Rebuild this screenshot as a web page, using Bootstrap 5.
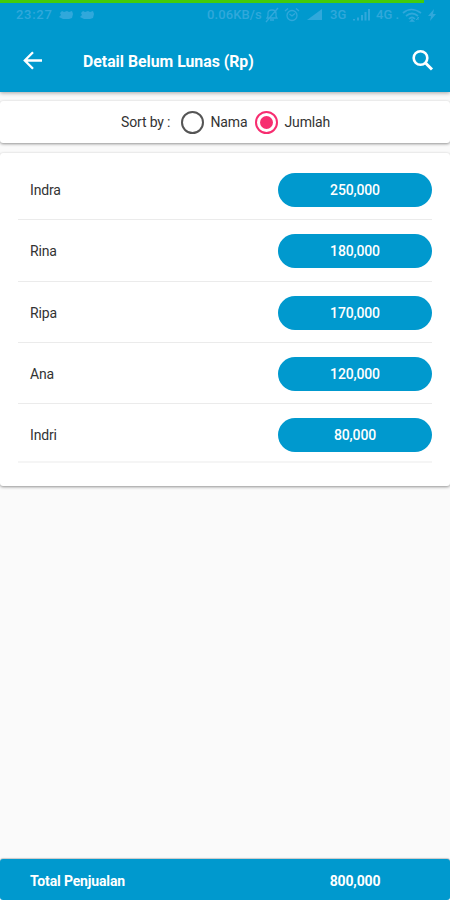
<!DOCTYPE html>
<html lang="id">
<head>
<meta charset="utf-8">
<meta name="viewport" content="width=device-width, initial-scale=1">
<title>Detail Belum Lunas (Rp)</title>
<link href="https://cdn.jsdelivr.net/npm/bootstrap@5.3.0/dist/css/bootstrap.min.css" rel="stylesheet">
<style>
body{font-family:Roboto,"Liberation Sans",sans-serif;background:#fafafa;color:#333;font-size:14px;letter-spacing:-.15px;line-height:20px;height:900px;overflow:hidden}
.bg-sea{background:#0099ce;color:#fff}
.app-top{height:92px;box-shadow:0 1px 4px rgba(0,0,0,.35)}
.charge{height:3px;background:#43cc0b;width:424px}
.status{height:24px;padding:0 14px 0 16px;color:#30a8db;font-size:13px;font-weight:500;line-height:24px;letter-spacing:0}
.status svg{display:block;flex:none}
.status span{white-space:nowrap;flex:none}
.clock{width:43px;letter-spacing:.7px}
.speed{width:57px;letter-spacing:.1px}
.gen3{width:23px;margin-left:6px}
.gen4{width:26px;margin-left:5px}
.gap6{margin-left:6px}
.bar{height:65px;padding:2px 15px 0 22px}
.bar h1{font-size:15.8px;letter-spacing:0;line-height:22px;margin:2px 0 0 39px;font-weight:700}
.panel{background:#fff;border-radius:3px;box-shadow:0 1px 3px rgba(0,0,0,.42)}
.sorter{height:42px;margin-top:9px;padding-left:121px}
.sorter span{white-space:nowrap}
.lbl-sort{width:51.5px}
.lbl-name{width:36px}
.dial{width:23px;height:23px;border:2px solid #555;border-radius:50%;background:#fff;margin:0 7px 0 8px}
.dial.on{border-color:#f72d70}
.dial.on::after{content:"";width:13px;height:13px;border-radius:50%;background:#f72d70}
.people{margin-top:10px;height:333px;padding:6px 18px 0}
.person{height:61.25px;border-bottom:1px solid #ebebeb;padding:2px 0 0 12px}
.person:last-child{height:59px;border-bottom:2px solid #f5f5f5;padding-top:4px}
.amount{width:154px;height:34px;font-weight:500}
.total{height:41px;padding-left:30px;font-weight:700;padding-top:2px;box-shadow:0 -1px 1px rgba(0,0,0,.2);border-radius:3px}
.sum{width:154px;margin-right:18px}
</style>
<script src="https://cdn.jsdelivr.net/npm/bootstrap@5.3.0/dist/js/bootstrap.bundle.min.js"></script>
</head>
<body class="d-flex flex-column">
<header class="app-top bg-sea flex-shrink-0">
  <div class="charge"></div>
  <div class="status d-flex align-items-center">
    <span class="clock">23:27</span>
    <svg width="36" height="12" viewBox="0 0 36 12" fill="currentColor"><path id="pet" d="M1 4l2-2 2 1 3-1 2 1 3-1 1 3-1 4-3 1H4L2 9 0 8l2-2z"/><use href="#pet" x="21"/></svg>
    <span class="speed ms-auto">0.06KB/s</span>
    <svg width="16" height="16" viewBox="0 0 16 16" fill="none" stroke="currentColor" stroke-width="1.300"><path d="M3 11h10l-1-2V6c0-2-1.500-3-4-3S4 4 4 6v3zM6 13h4M14 1L2 15"/></svg>
    <svg class="ms-1" width="16" height="16" viewBox="0 0 16 16" fill="none" stroke="currentColor" stroke-width="1.300"><circle cx="8" cy="8.500" r="5"/><path d="M1 4l3-2.500M15 4l-3-2.500M5.500 7L8 9l3-2.500"/></svg>
    <svg class="gap6" width="18" height="14" viewBox="0 0 18 14" fill="currentColor"><path d="M1 12L16 1v11z"/></svg>
    <span class="gen3">3G</span>
    <svg width="18" height="14" viewBox="0 0 18 14" fill="currentColor"><path d="M0 11h2v1.500H0zM4 9.500h2v3H4zM8 7h2v5.500H8zM11.500 4h2v8.500h-2zM15 1h2v11.500h-2z"/></svg>
    <span class="gen4">4G .</span>
    <svg width="20" height="16" viewBox="0 0 20 16" fill="none" stroke="currentColor" stroke-width="1.700"><path d="M1 6q8-7 18 0M4 9q6-5 12 0M7 12q3-3 6 0"/><path d="M9 14l1-1 1 1z"/><path d="M14 13l3-3M16 13v-3" stroke-width="1"/></svg>
    <svg class="gap6" width="8" height="14" viewBox="0 0 8 14" fill="currentColor"><path d="M6 1L0 8h3l-1 5 6-7H5z"/></svg>
  </div>
  <div class="bar d-flex align-items-center">
    <svg width="22" height="22" viewBox="0 0 22 22" fill="none" stroke="#fff" stroke-width="2.300"><path d="M20 10.500H3M11 2.300L2.800 10.500l8.200 8.200"/></svg>
    <h1>Detail Belum Lunas (Rp)</h1>
    <svg class="ms-auto" width="24" height="24" viewBox="0 0 24 24" fill="none" stroke="#fff" stroke-width="2.600"><circle cx="9.500" cy="9" r="6.800"/><path d="M14.300 13.800l6.700 6.700" stroke-width="3"/></svg>
  </div>
</header>
<section class="panel sorter d-flex align-items-center flex-shrink-0">
  <span class="lbl-sort">Sort by :</span><i class="dial"></i><span class="lbl-name">Nama</span>
  <i class="dial on d-flex align-items-center justify-content-center"></i><span class="lbl-sum">Jumlah</span>
</section>
<main class="panel people flex-shrink-0">
  <div class="person d-flex align-items-center justify-content-between"><span>Indra</span><span class="amount bg-sea rounded-pill d-flex align-items-center justify-content-center">250,000</span></div>
  <div class="person d-flex align-items-center justify-content-between"><span>Rina</span><span class="amount bg-sea rounded-pill d-flex align-items-center justify-content-center">180,000</span></div>
  <div class="person d-flex align-items-center justify-content-between"><span>Ripa</span><span class="amount bg-sea rounded-pill d-flex align-items-center justify-content-center">170,000</span></div>
  <div class="person d-flex align-items-center justify-content-between"><span>Ana</span><span class="amount bg-sea rounded-pill d-flex align-items-center justify-content-center">120,000</span></div>
  <div class="person d-flex align-items-center justify-content-between"><span>Indri</span><span class="amount bg-sea rounded-pill d-flex align-items-center justify-content-center">80,000</span></div>
</main>
<footer class="total bg-sea mt-auto d-flex align-items-center justify-content-between flex-shrink-0"><span>Total Penjualan</span><span class="sum text-center">800,000</span></footer>
</body>
</html>
